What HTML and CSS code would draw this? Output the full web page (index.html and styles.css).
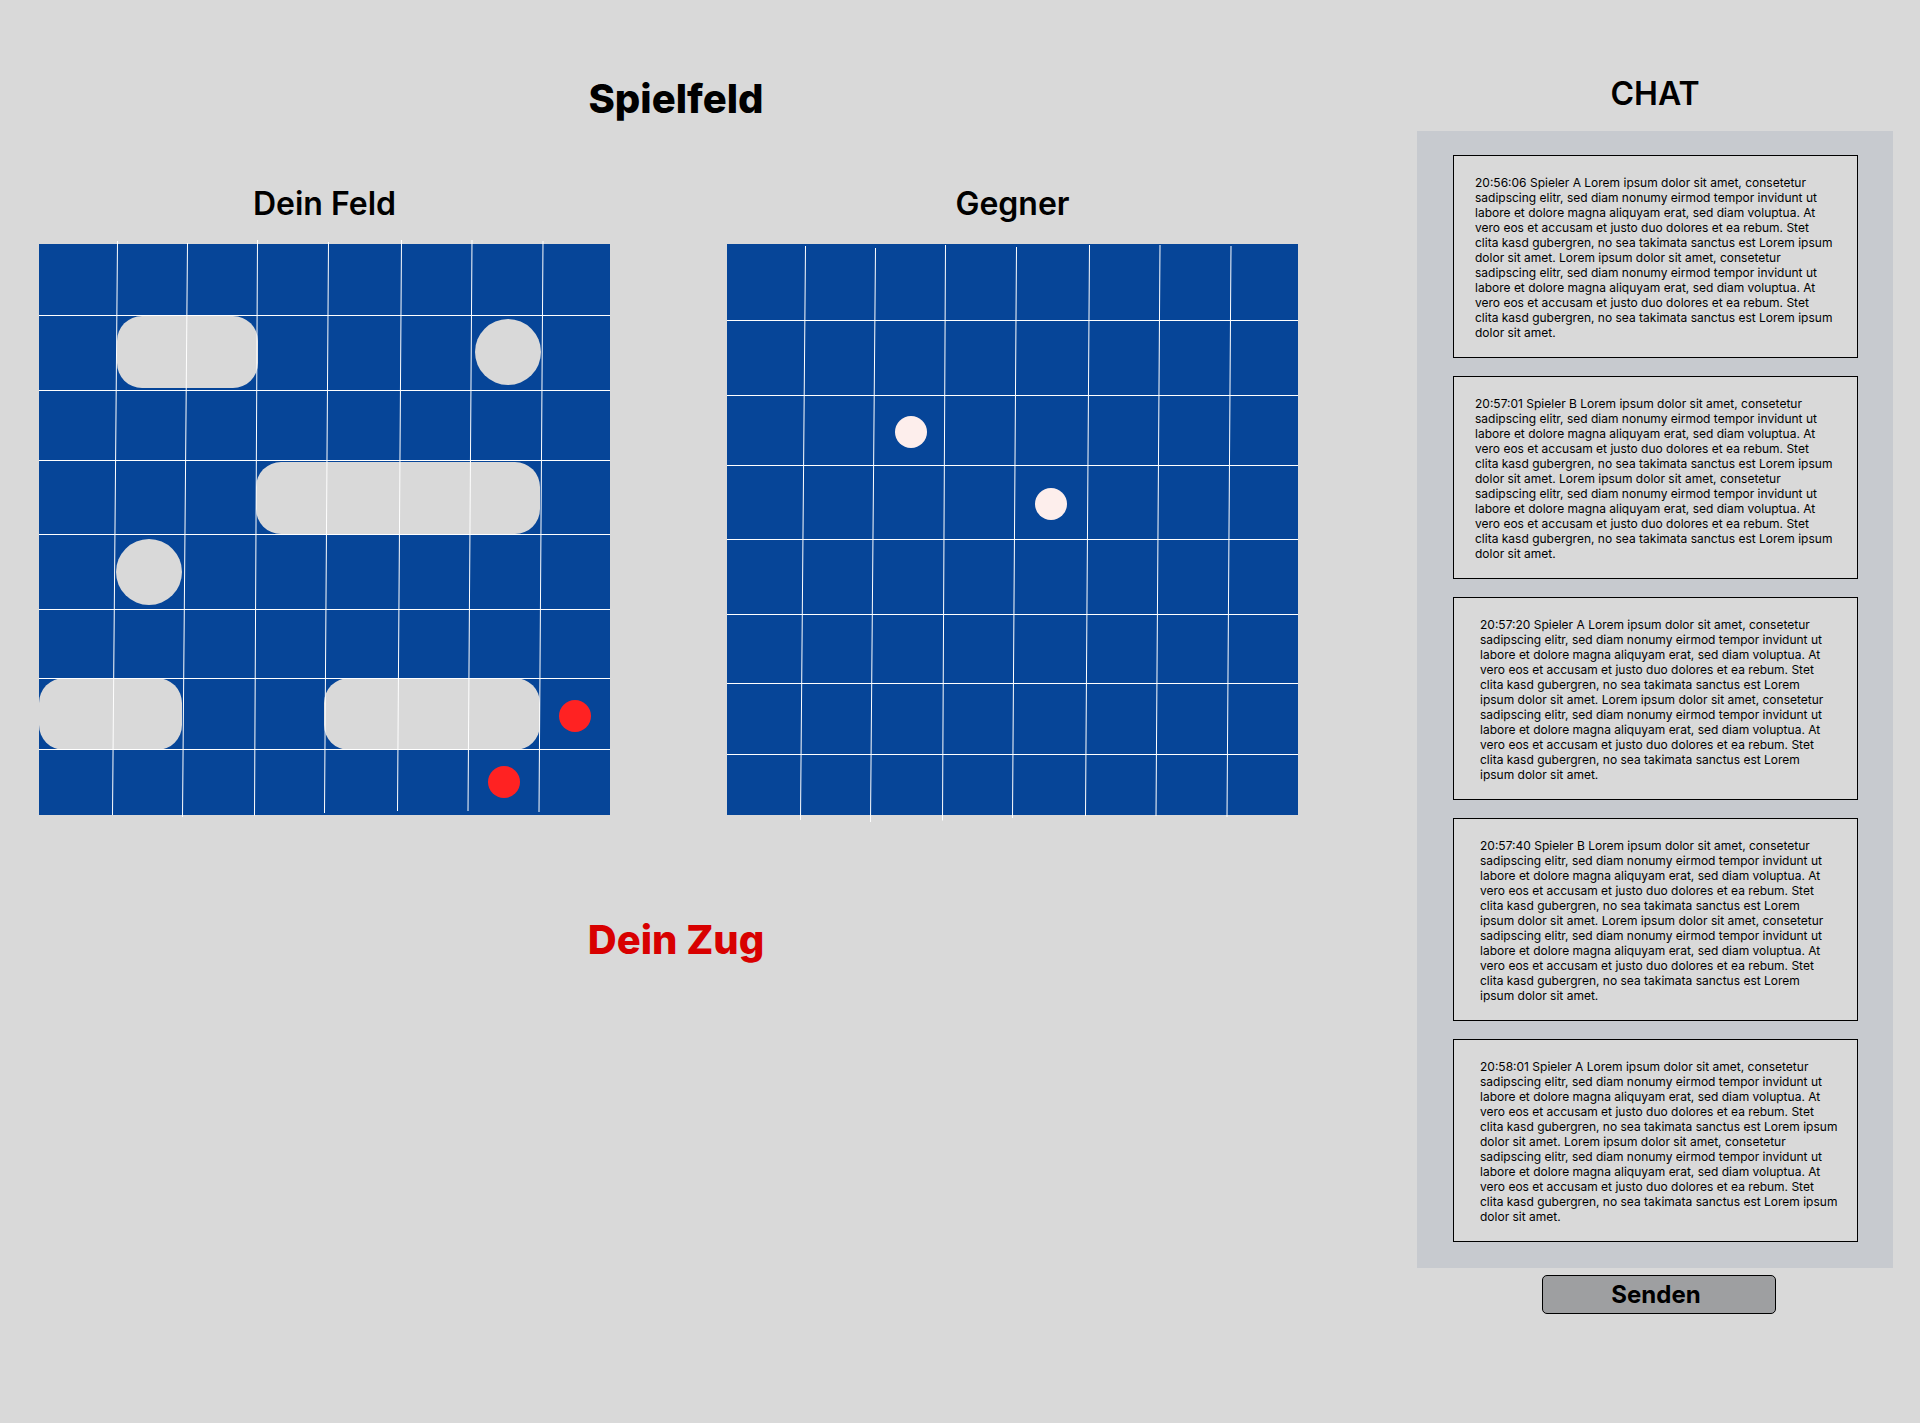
FILE: index.html
```html
<!DOCTYPE html>
<html lang="de">
<head>
  <meta charset="utf-8">
  <meta name="viewport" content="width=device-width, initial-scale=1">
  <title>Spielfeld</title>
  <link rel="stylesheet" href="styles.css">
</head>
<body>
  <div class="page">
    <main class="game">
      <h1 class="game-title">Spielfeld</h1>
      <div class="boards">
        <section class="board">
          <h2 class="heading">Dein Feld</h2>
          <svg class="board-grid" viewBox="0 0 571 571" role="img" aria-label="Dein Feld">
            <rect class="water" width="571" height="571"/>
            <g class="ship">
              <rect x="78" y="72" width="141" height="72" rx="25"/>
              <circle cx="469" cy="108" r="33"/>
              <rect x="217" y="218" width="284" height="72" rx="25"/>
              <circle cx="110" cy="328" r="33"/>
              <rect x="0" y="434" width="143" height="72" rx="25"/>
              <rect x="285" y="434" width="216" height="72" rx="25"/>
            </g>
            <g id="lines" class="lines">
              <path d="M0 71.5H571M0 146.5H571M0 216.5H571M0 290.5H571M0 365.5H571M0 434.5H571M0 505.5H571"/>
              <path d="M78.5 -3L73.5 571M148.5 -1L143.5 573M218.5 -4L215.5 571.5M289.5 -2L285.5 569M362.5 -4L358.5 567M433 -4L429 567M504 -3L500 568"/>
            </g>
            <g class="hit">
              <circle cx="536" cy="472" r="16"/>
              <circle cx="465" cy="538" r="16"/>
            </g>
          </svg>
        </section>
        <section class="board">
          <h2 class="heading">Gegner</h2>
          <svg class="board-grid" viewBox="0 0 571 571" role="img" aria-label="Gegner">
            <rect class="water" width="571" height="571"/>
            <use href="#lines" y="5"/>
            <g class="miss">
              <circle cx="184" cy="188" r="16"/>
              <circle cx="324" cy="260" r="16"/>
            </g>
          </svg>
        </section>
      </div>
      <p class="status">Dein Zug</p>
    </main>

    <aside class="chat">
      <h2 class="heading">CHAT</h2>
      <div class="messages">
        <p class="message">20:56:06 Spieler A Lorem ipsum dolor sit amet, consetetur sadipscing elitr, sed diam nonumy eirmod tempor invidunt ut labore et dolore magna aliquyam erat, sed diam voluptua. At vero eos et accusam et justo duo dolores et ea rebum. Stet clita kasd gubergren, no sea takimata sanctus est Lorem ipsum dolor sit amet. Lorem ipsum dolor sit amet, consetetur sadipscing elitr, sed diam nonumy eirmod tempor invidunt ut labore et dolore magna aliquyam erat, sed diam voluptua. At vero eos et accusam et justo duo dolores et ea rebum. Stet clita kasd gubergren, no sea takimata sanctus est Lorem ipsum dolor sit amet.</p>
        <p class="message">20:57:01 Spieler B Lorem ipsum dolor sit amet, consetetur sadipscing elitr, sed diam nonumy eirmod tempor invidunt ut labore et dolore magna aliquyam erat, sed diam voluptua. At vero eos et accusam et justo duo dolores et ea rebum. Stet clita kasd gubergren, no sea takimata sanctus est Lorem ipsum dolor sit amet. Lorem ipsum dolor sit amet, consetetur sadipscing elitr, sed diam nonumy eirmod tempor invidunt ut labore et dolore magna aliquyam erat, sed diam voluptua. At vero eos et accusam et justo duo dolores et ea rebum. Stet clita kasd gubergren, no sea takimata sanctus est Lorem ipsum dolor sit amet.</p>
        <p class="message message-inset message-narrow">20:57:20 Spieler A Lorem ipsum dolor sit amet, consetetur sadipscing elitr, sed diam nonumy eirmod tempor invidunt ut labore et dolore magna aliquyam erat, sed diam voluptua. At vero eos et accusam et justo duo dolores et ea rebum. Stet clita kasd gubergren, no sea takimata sanctus est Lorem ipsum dolor sit amet. Lorem ipsum dolor sit amet, consetetur sadipscing elitr, sed diam nonumy eirmod tempor invidunt ut labore et dolore magna aliquyam erat, sed diam voluptua. At vero eos et accusam et justo duo dolores et ea rebum. Stet clita kasd gubergren, no sea takimata sanctus est Lorem ipsum dolor sit amet.</p>
        <p class="message message-inset message-narrow">20:57:40 Spieler B Lorem ipsum dolor sit amet, consetetur sadipscing elitr, sed diam nonumy eirmod tempor invidunt ut labore et dolore magna aliquyam erat, sed diam voluptua. At vero eos et accusam et justo duo dolores et ea rebum. Stet clita kasd gubergren, no sea takimata sanctus est Lorem ipsum dolor sit amet. Lorem ipsum dolor sit amet, consetetur sadipscing elitr, sed diam nonumy eirmod tempor invidunt ut labore et dolore magna aliquyam erat, sed diam voluptua. At vero eos et accusam et justo duo dolores et ea rebum. Stet clita kasd gubergren, no sea takimata sanctus est Lorem ipsum dolor sit amet.</p>
        <p class="message message-inset">20:58:01 Spieler A Lorem ipsum dolor sit amet, consetetur sadipscing elitr, sed diam nonumy eirmod tempor invidunt ut labore et dolore magna aliquyam erat, sed diam voluptua. At vero eos et accusam et justo duo dolores et ea rebum. Stet clita kasd gubergren, no sea takimata sanctus est Lorem ipsum dolor sit amet. Lorem ipsum dolor sit amet, consetetur sadipscing elitr, sed diam nonumy eirmod tempor invidunt ut labore et dolore magna aliquyam erat, sed diam voluptua. At vero eos et accusam et justo duo dolores et ea rebum. Stet clita kasd gubergren, no sea takimata sanctus est Lorem ipsum dolor sit amet.</p>
      </div>
      <div class="chat-actions">
        <button class="send" type="button">Senden</button>
      </div>
    </aside>
  </div>
</body>
</html>
```
FILE: styles.css
```css
* {
  box-sizing: border-box;
}

body {
  margin: 0;
  background: #d9d9d9;
  color: #000;
  font-family: Inter, "Liberation Sans", sans-serif;
}

h1,
h2,
p {
  margin: 0;
}

.page {
  display: grid;
  grid-template-columns: minmax(0, 1fr) 476px;
  column-gap: 104px;
  padding: 74px 27px 74px 39px;
}

.game-title,
.status {
  font-size: 40px;
  line-height: 50px;
  font-weight: 800;
  text-align: center;
}

.heading {
  font-size: 32px;
  line-height: 40px;
  font-weight: 600;
  text-align: center;
}

.boards {
  display: grid;
  grid-template-columns: 1fr 1fr;
  column-gap: 117px;
  margin: 60px 0 100px;
  padding-right: 15px;
}

.board {
  display: flex;
  flex-direction: column;
  gap: 20px;
}

.board-grid {
  display: block;
  width: 100%;
  overflow: visible;
}

.water {
  fill: #064598;
}

.ship {
  fill: #d9d9d9;
}

.lines {
  fill: none;
  stroke: #fff;
  stroke-width: 1;
}

.hit {
  fill: #ff2222;
}

.miss {
  fill: #fdeeec;
}

.status {
  color: #d80000;
}

.chat {
  display: flex;
  flex-direction: column;
}

.messages {
  display: flex;
  flex-direction: column;
  gap: 18px;
  margin-top: 17px;
  padding: 24px 35px 26px 36px;
  background: #c7cacf;
}

.message {
  padding: 19px 23px 17px 21px;
  border: 1px solid #000;
  background: #d9d9d9;
  font-size: 12px;
  line-height: 15px;
}

.message-inset {
  padding-left: 26px;
  padding-right: 18px;
}

.message-narrow {
  padding-right: 26px;
}

.chat-actions {
  display: flex;
  justify-content: center;
  margin-top: 7px;
  padding-left: 8px;
}

.send {
  width: 234px;
  height: 39px;
  padding: 0 6px 0 0;
  border: 1px solid #000;
  border-radius: 5px;
  background: #9e9fa1;
  color: #000;
  font-family: inherit;
  font-size: 24px;
  font-weight: 700;
  line-height: 32px;
}
```
